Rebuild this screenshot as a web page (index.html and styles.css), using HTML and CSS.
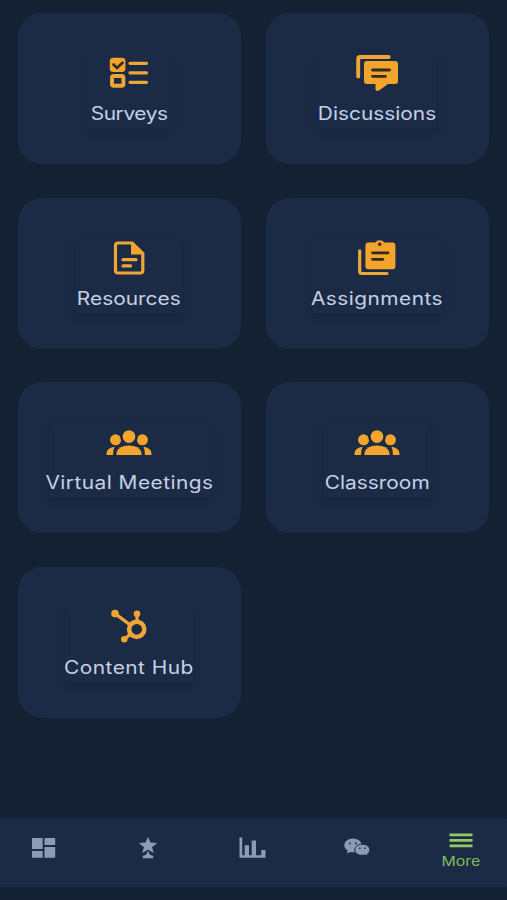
FILE: index.html
```html
<!DOCTYPE html>
<html lang="en">
<head>
    <meta charset="UTF-8" />
    <meta name="viewport" content="width=device-width, initial-scale=1" />
    <title>More</title>
    <link rel="stylesheet" href="styles.css">
</head>
<body>
    <main class="tiles">
        <a class="tile" href="#">
            <div class="tile-content">
                <svg class="icon" viewBox="0 0 48 40">
                    <rect class="fill" x="4.8" y="4.8" width="15.6" height="14.2" rx="3.5" />
                    <path class="cut" d="M8.5 11.6l3.5 3.3 5.5-5.2" />
                    <rect class="line wide" x="7" y="23" width="11.4" height="9.8" rx="1.8" />
                    <path class="line" d="M25 10.3h16.5M25 19.8h16.5M25 29.3h16.5" />
                </svg>
                <span class="label tight">Surveys</span>
            </div>
        </a>
        <a class="tile" href="#">
            <div class="tile-content">
                <svg class="icon" viewBox="0 0 48 40">
                    <path class="line wide" d="M5.2 23.5V6q0-2 2-2h28.5" />
                    <path class="fill" d="M14 8h28q3 0 3 3v17q0 3-3 3h-7l-8.5 6.2q-4 2-4-1V31H14q-3 0-3-3V11q0-3 3-3z" />
                    <path class="cut" d="M19.5 17h17M19.5 23.3h13" />
                </svg>
                <span class="label">Discussions</span>
            </div>
        </a>
        <a class="tile" href="#">
            <div class="tile-content">
                <svg class="icon" viewBox="0 0 48 40">
                    <path class="line" d="M13 5h14L37.8 15.300v17.200q0 2.500-2.500 2.500H13q-2.500 0-2.500-2.500v-25Q10.500 5 13 5z" />
                    <path class="fill" d="M26 5l12 11.500H26z" />
                    <path class="line" d="M18 21.700h13M18 27.900h7.500" />
                </svg>
                <span class="label">Resources</span>
            </div>
        </a>
        <a class="tile" href="#">
            <div class="tile-content">
                <svg class="icon" viewBox="0 0 48 40">
                    <path class="line" d="M6.7 12.800v20.700q0 2 2 2H34" />
                    <path class="fill" d="M15.400 4.500h6.800a5 4 0 0 1 9 0h8.200q3 0 3 3v20.800q0 3-3 3h-24q-3 0-3-3V7.500q0-3 3-3z" />
                    <circle class="hole" cx="26.7" cy="6.3" r="1.7" />
                    <path class="cut" d="M19.500 14.900h15.500M19.500 21.300h10.300" />
                </svg>
                <span class="label spaced">Assignments</span>
            </div>
        </a>
        <a class="tile" href="#">
            <div class="tile-content">
                <svg class="icon" viewBox="0 0 48 40">
                    <circle class="fill" cx="10.6" cy="17.8" r="5.5" />
                    <circle class="fill" cx="37.4" cy="17.8" r="5.5" />
                    <path class="fill" d="M1.500 33v-2q1-5.500 8-6.200Q8 28 8 33zM46.500 33v-2q-1-5.500-8-6.200Q40 28 40 33z" />
                    <circle class="fill outlined" cx="24" cy="14.6" r="7.6" />
                    <path class="fill" d="M11.500 33v-2.300q2-7.300 12.500-7.300t12.500 7.300V33z" />
                </svg>
                <span class="label spaced">Virtual Meetings</span>
            </div>
        </a>
        <a class="tile" href="#">
            <div class="tile-content">
                <svg class="icon" viewBox="0 0 48 40">
                    <circle class="fill" cx="10.6" cy="17.8" r="5.5" />
                    <circle class="fill" cx="37.4" cy="17.8" r="5.5" />
                    <path class="fill" d="M1.500 33v-2q1-5.500 8-6.200Q8 28 8 33zM46.500 33v-2q-1-5.500-8-6.200Q40 28 40 33z" />
                    <circle class="fill outlined" cx="24" cy="14.6" r="7.6" />
                    <path class="fill" d="M11.500 33v-2.300q2-7.300 12.500-7.300t12.500 7.300V33z" />
                </svg>
                <span class="label">Classroom</span>
            </div>
        </a>
        <a class="tile" href="#">
            <div class="tile-content">
                <svg class="icon" viewBox="0 0 48 40">
                    <circle class="line ring" cx="31.7" cy="22.3" r="7.600" />
                    <path class="line" d="M10 6.600l15.500 11.500M32 7v7.500M19.300 32.300l6.500-5.500" />
                    <circle class="fill" cx="10" cy="6.6" r="3.8" />
                    <circle class="fill" cx="32" cy="6.8" r="3.3" />
                    <circle class="fill" cx="19.3" cy="32.3" r="3.3" />
                </svg>
                <span class="label spaced">Content Hub</span>
            </div>
        </a>
    </main>

    <nav class="navbar">
        <a class="nav-item" href="#">
            <svg class="nav-icon" viewBox="0 0 28 24">
                <path d="M2 2h10.700v11H2zM14.500 2h10.700v7H14.500zM2 15h10.700v6.700H2zM14.500 11h10.700v10.700H14.500z" />
            </svg>
        </a>
        <a class="nav-item" href="#">
            <svg class="nav-icon" viewBox="0 0 28 24">
                <path d="M14 .8l2.400 5.700 6.800.4-5.200 4.300 1.800 5.700L14 13.700l-5.800 3.200L10 11.200 4.800 6.900l6.800-.4zM14 15l2 3.700 3.300 1.200v2.400H8.700v-2.400L12 18.700z" />
            </svg>
        </a>
        <a class="nav-item" href="#">
            <svg class="nav-icon" viewBox="0 0 28 24">
                <path d="M.5 1.500h2.700v17.700h23.300v2.500H.5zM5.700 9.300H10v10H5.700zM12.700 4.500H17v14.800h-4.300zM22.200 14h4.300v6h-4.300z" />
            </svg>
        </a>
        <a class="nav-item" href="#">
            <svg class="nav-icon" viewBox="0 0 28 24">
                <path d="M10 2.500c5 0 8.700 3.200 8.700 7S15 16.300 10 16.300l-2.500-.4L4 17.400l.6-3C2.500 13 1.300 11.400 1.300 9.500c0-3.800 3.700-7 8.700-7z" />
                <path class="bubble-front" d="M19.300 8.200c4.400 0 7.500 2.600 7.500 5.700 0 1.800-1 3.200-2.500 4.200l.4 2-2.600-1.200c-5.800 1.600-10.300-1.400-10.300-5 0-3.100 3.100-5.700 7.500-5.700z" />
                <path class="eye" d="M6 6.500h1.800v1.700H6zM12 6.500h1.800v1.700H12zM16 11.500h1.600v1.600H16zM21 11.500h1.600v1.600H21z" />
            </svg>
        </a>
        <a class="nav-item active" href="#">
            <svg class="menu-icon" viewBox="0 0 24 16">
                <path d="M.5 .5h23v2.700H.5zM.5 6h23v2.700H.5zM.5 11.500h23v2.700H.5z" />
            </svg>
            <span class="nav-label">More</span>
        </a>
    </nav>
</body>
</html>
```

FILE: styles.css
```css
* {
    box-sizing: border-box;
}

body {
    margin: 0;
    height: 900px;
    display: flex;
    flex-direction: column;
    background-color: #132133;
    font-family: Inter, "Open Sans", sans-serif;
    overflow: hidden;
}

a {
    text-decoration: none;
    color: inherit;
}

.tiles {
    flex: 1;
    display: grid;
    grid-template-columns: 1fr 1fr;
    grid-auto-rows: 151px;
    gap: 33.7px 25px;
    padding: 13px 18px 0 17.5px;
}

.tile {
    display: flex;
    justify-content: center;
    align-items: flex-start;
    padding-top: 40px;
    background-color: #1c2b45;
    border-radius: 24px;
}

.tile-content {
    display: flex;
    flex-direction: column;
    align-items: center;
    height: 75px;
    padding: 0 8px;
    background-color: #1c2b45;
    box-shadow: 0 4px 7px rgba(10, 20, 40, 0.22);
}

.icon {
    width: 48px;
    height: 40px;
    flex-shrink: 0;
}

.fill {
    fill: #f2a42c;
}

.line {
    fill: none;
    stroke: #f0a637;
    stroke-width: 3.2;
    stroke-linecap: round;
    stroke-linejoin: round;
}

.wide {
    stroke-width: 3.9;
}

.ring {
    stroke-width: 4.5;
}

.cut {
    fill: none;
    stroke: #33291f;
    stroke-width: 2.8;
    stroke-linecap: round;
}

.hole {
    fill: #33291f;
}

.outlined {
    stroke: #1c2b45;
    stroke-width: 2.5;
}

.label {
    margin-top: 8px;
    font-size: 18px;
    line-height: 26px;
    color: #c5d0e5;
    white-space: nowrap;
    transform: scaleX(1.16);
}

.tight {
    letter-spacing: -0.35px;
}

.spaced {
    letter-spacing: 0.4px;
}

/* bottom navigation */
.navbar {
    display: flex;
    justify-content: space-between;
    height: 68px;
    margin-bottom: 13px;
    padding: 0 22px 0 20px;
    background-color: #1c2b45;
    box-shadow: 0 0 3px #1c2b45;
}

.nav-item {
    display: flex;
    flex-direction: column;
    align-items: center;
    width: 48px;
    padding-top: 17px;
    color: #8d9bb3;
}

.nav-icon {
    width: 28px;
    height: 24px;
    fill: currentColor;
}

.bubble-front {
    stroke: #1c2b45;
    stroke-width: 1;
}

.eye {
    fill: #26354e;
}

.active {
    padding-top: 14px;
    color: #82bd5c;
}

.menu-icon {
    width: 24px;
    height: 16px;
    flex-shrink: 0;
    fill: #91ca6a;
}

.nav-label {
    margin-top: 3px;
    font-size: 13px;
    line-height: 18px;
    transform: scaleX(1.22);
}
```
